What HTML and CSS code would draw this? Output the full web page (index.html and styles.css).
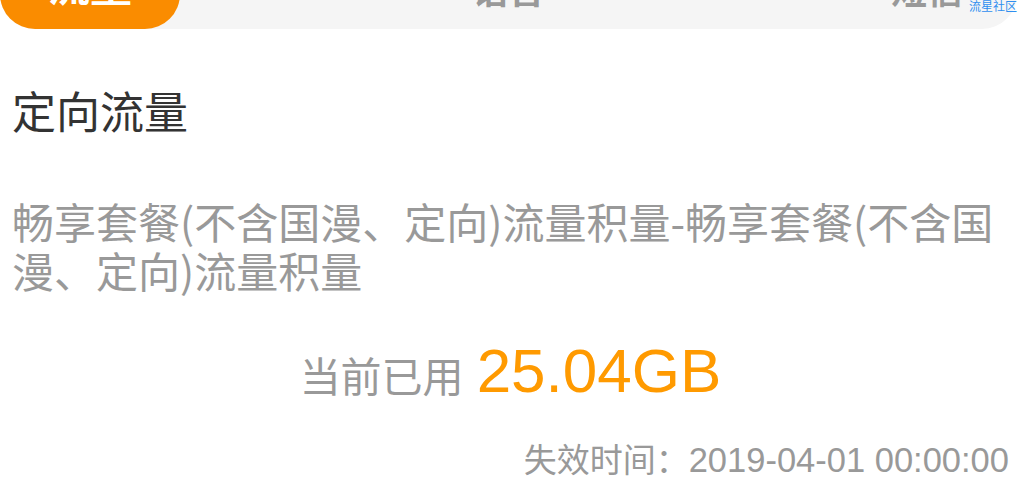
FILE: index.html
```html
<!DOCTYPE html>
<html lang="zh-CN">
<head>
<meta charset="utf-8">
<title>定向流量</title>
<link rel="stylesheet" href="styles.css">
</head>
<body>
<div class="page">
  <nav class="tabs">
    <div class="tab tab-active"><span>流量</span></div>
    <div class="tab"><span>语音</span></div>
    <div class="tab"><span>短信</span></div>
  </nav>
  <div class="watermark">流星社区</div>
  <section class="content">
    <h1 class="title">定向流量</h1>
    <p class="desc">畅享套餐(不含国漫、定向)流量积量-畅享套餐(不含国漫、定向)流量积量</p>
    <div class="usage"><span class="usage-label">当前已用</span><span class="usage-value">25.04GB</span></div>
    <div class="expire"><span class="expire-label">失效时间：</span><span class="expire-date">2019-04-01 00:00:00</span></div>
  </section>
</div>
</body>
</html>
```

FILE: styles.css
```css
html, body {
  margin: 0;
  padding: 0;
  background: #ffffff;
  overflow: hidden;
}

body {
  font-family: "Noto Sans CJK SC", "Liberation Sans", sans-serif;
}

.page {
  position: relative;
  display: flow-root;
  width: 1021px;
  height: 499px;
}

.tabs {
  display: flex;
  justify-content: space-between;
  width: 1017px;
  height: 70px;
  margin-top: -41px;
  background: #f5f5f5;
  border-radius: 35px;
}

.tab {
  width: 180px;
  height: 70px;
  border-radius: 35px;
  display: flex;
  justify-content: center;
  align-items: flex-start;
  padding-top: 11px;
  box-sizing: border-box;
  font-size: 36px;
  line-height: 36px;
  font-weight: 700;
  color: #999999;
}

.tab-active {
  background: #fa8c00;
  color: #ffffff;
  font-size: 42px;
  line-height: 42px;
  padding-top: 4px;
}

.watermark {
  position: absolute;
  top: 0;
  right: 4px;
  font-size: 12px;
  line-height: 12px;
  color: #2f8ff0;
}

.content {
  display: flex;
  flex-direction: column;
  padding: 0 12px;
}

.title {
  margin: 51px 0 0;
  font-size: 44px;
  line-height: 60px;
  font-weight: 400;
  color: #333333;
}

.desc {
  margin: 56px 0 0;
  font-size: 42px;
  line-height: 49px;
  color: #999999;
}

.usage {
  margin-top: 42px;
  text-align: center;
  line-height: 70px;
  height: 70px;
}

.usage-label {
  font-size: 41px;
  line-height: 1;
  color: #999999;
}

.usage-value {
  margin-left: 13px;
  font-family: "Liberation Sans", sans-serif;
  font-size: 62px;
  color: #ff9a00;
}

.expire {
  margin-top: 34px;
  text-align: right;
  line-height: 40px;
  height: 40px;
  color: #999999;
}

.expire-label {
  font-size: 33px;
  line-height: 1;
}

.expire-date {
  font-family: "Liberation Sans", sans-serif;
  font-size: 34.5px;
}
```
